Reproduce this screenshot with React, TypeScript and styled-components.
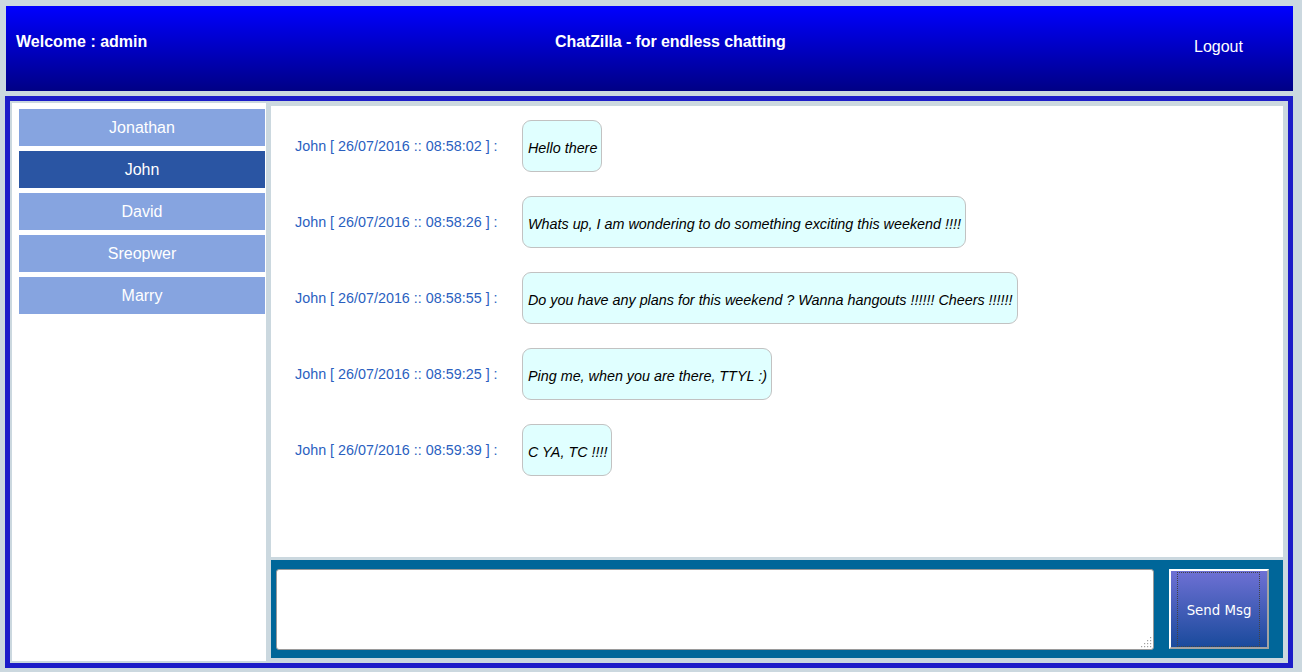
import React from "react";
import styled, { createGlobalStyle } from "styled-components";

const Global = createGlobalStyle`
  html, body { margin: 0; padding: 0; background: #cbd8df; }
  body { font-family: "Liberation Sans", Arial, sans-serif; }
`;

const Page = styled.div`
  width: 1302px;
  height: 672px;
  box-sizing: border-box;
  padding: 6px 0 0 5px;
  background: #cbd8df;
  overflow: hidden;
`;

const Header = styled.header`
  margin-left: 1px;
  width: 1287px;
  height: 85px;
  box-sizing: border-box;
  padding-left: 10px;
  background: linear-gradient(to bottom, #0000ff, #000085);
  display: grid;
  grid-template-columns: 539px 1fr 99px;
  color: #fff;
  font-size: 16px;
`;

const HeaderCell = styled.div<{ $top: number; $bold?: boolean; $tight?: boolean }>`
  padding-top: ${(p) => p.$top}px;
  font-weight: ${(p) => (p.$bold ? 700 : 400)};
  letter-spacing: ${(p) => (p.$tight ? "-0.1px" : "normal")};
  line-height: 18px;
`;

const Main = styled.main`
  margin-top: 5px;
  width: 1288px;
  height: 572px;
  box-sizing: border-box;
  border: 5px solid #1c1cc8;
  background: #cbd8df;
  display: flex;
  gap: 5px;
  padding: 2px 5px 2px 2px;
`;

const Sidebar = styled.aside`
  width: 254px;
  flex: none;
  background: #fff;
  box-sizing: border-box;
  padding: 6px 1px 0 7px;
  display: flex;
  flex-direction: column;
  gap: 5px;
`;

const UserButton = styled.div<{ $active?: boolean }>`
  height: 37px;
  display: flex;
  align-items: center;
  justify-content: center;
  background: ${(p) => (p.$active ? "#2a55a3" : "#86a4e0")};
  color: #fff;
  font-size: 16px;
`;

const ChatColumn = styled.section`
  flex: 1;
  display: flex;
  flex-direction: column;
  gap: 3px;
  margin: 3px 0 3px;
`;

const Messages = styled.div`
  flex: 1;
  background: #fff;
  padding: 14px 0 0 24px;
  display: flex;
  flex-direction: column;
  gap: 24px;
`;

const Row = styled.div`
  display: flex;
  align-items: center;
`;

const Meta = styled.div`
  width: 227px;
  flex: none;
  color: #2b5fbf;
  font-size: 14.35px;
`;

const Bubble = styled.div`
  height: 52px;
  box-sizing: border-box;
  padding: 4px 4px 0 5px;
  display: flex;
  align-items: center;
  background: #e0ffff;
  border: 1px solid #c2c2c2;
  border-radius: 9px;
  font-size: 14.35px;
  font-style: italic;
  color: #000;
  white-space: nowrap;
`;

const Composer = styled.div`
  height: 98px;
  flex: none;
  background: #006699;
  box-sizing: border-box;
  padding: 9px 14px 8px 5px;
  display: flex;
  gap: 15px;
`;

const InputWrap = styled.div`
  position: relative;
  flex: 1;
  height: 81px;
`;

const Input = styled.textarea`
  display: block;
  width: 100%;
  height: 100%;
  box-sizing: border-box;
  border: 1px solid #9a9a9a;
  border-radius: 3px;
  background: #fff;
  resize: none;
  outline: none;
  margin: 0;
  font-family: "Liberation Sans", Arial, sans-serif;
`;

const Grip = styled.svg`
  position: absolute;
  right: 2px;
  bottom: 2px;
  width: 11px;
  height: 11px;
  pointer-events: none;
`;

const SendButton = styled.button`
  position: relative;
  width: 100px;
  height: 80px;
  box-sizing: border-box;
  margin: 0;
  border-style: solid;
  border-width: 2px;
  border-color: #ffffff #a3a3a3 #a3a3a3 #ffffff;
  background: linear-gradient(to bottom, #6e70d4, #1a4a9c);
  color: #fff;
  font-family: "DejaVu Sans", sans-serif;
  font-size: 13.33px;
  padding: 2px 0 0;
  &::after {
    content: "";
    position: absolute;
    left: 6px;
    top: 1px;
    right: 7px;
    bottom: 0px;
    border: 1px dotted #444;
  }
`;

const users = ["Jonathan", "John", "David", "Sreopwer", "Marry"];

const messages = [
  { time: "08:58:02", text: "Hello there" },
  { time: "08:58:26", text: "Whats up, I am wondering to do something exciting this weekend !!!!" },
  { time: "08:58:55", text: "Do you have any plans for this weekend ? Wanna hangouts !!!!!! Cheers !!!!!!" },
  { time: "08:59:25", text: "Ping me, when you are there, TTYL :)" },
  { time: "08:59:39", text: "C YA, TC !!!!" },
];

const gripDots: [number, number][] = [
  [9, 0], [9, 3], [6, 3], [9, 6], [6, 6], [3, 6], [9, 9], [6, 9], [3, 9], [0, 9],
];

export default function App() {
  return (
    <Page>
      <Global />
      <Header>
        <HeaderCell $top={27} $bold>Welcome : admin</HeaderCell>
        <HeaderCell $top={27} $bold $tight>ChatZilla - for endless chatting</HeaderCell>
        <HeaderCell $top={32}>Logout</HeaderCell>
      </Header>
      <Main>
        <Sidebar>
          {users.map((u) => (
            <UserButton key={u} $active={u === "John"}>{u}</UserButton>
          ))}
        </Sidebar>
        <ChatColumn>
          <Messages>
            {messages.map((m) => (
              <Row key={m.time}>
                <Meta>John [ 26/07/2016 :: {m.time} ] :</Meta>
                <Bubble>{m.text}</Bubble>
              </Row>
            ))}
          </Messages>
          <Composer>
            <InputWrap>
              <Input />
              <Grip viewBox="0 0 11 11">
                {gripDots.map(([x, y]) => (
                  <rect key={`${x}-${y}`} x={x} y={y} width="1.2" height="1.2" fill="#a0a0a0" />
                ))}
              </Grip>
            </InputWrap>
            <SendButton>Send Msg</SendButton>
          </Composer>
        </ChatColumn>
      </Main>
    </Page>
  );
}
